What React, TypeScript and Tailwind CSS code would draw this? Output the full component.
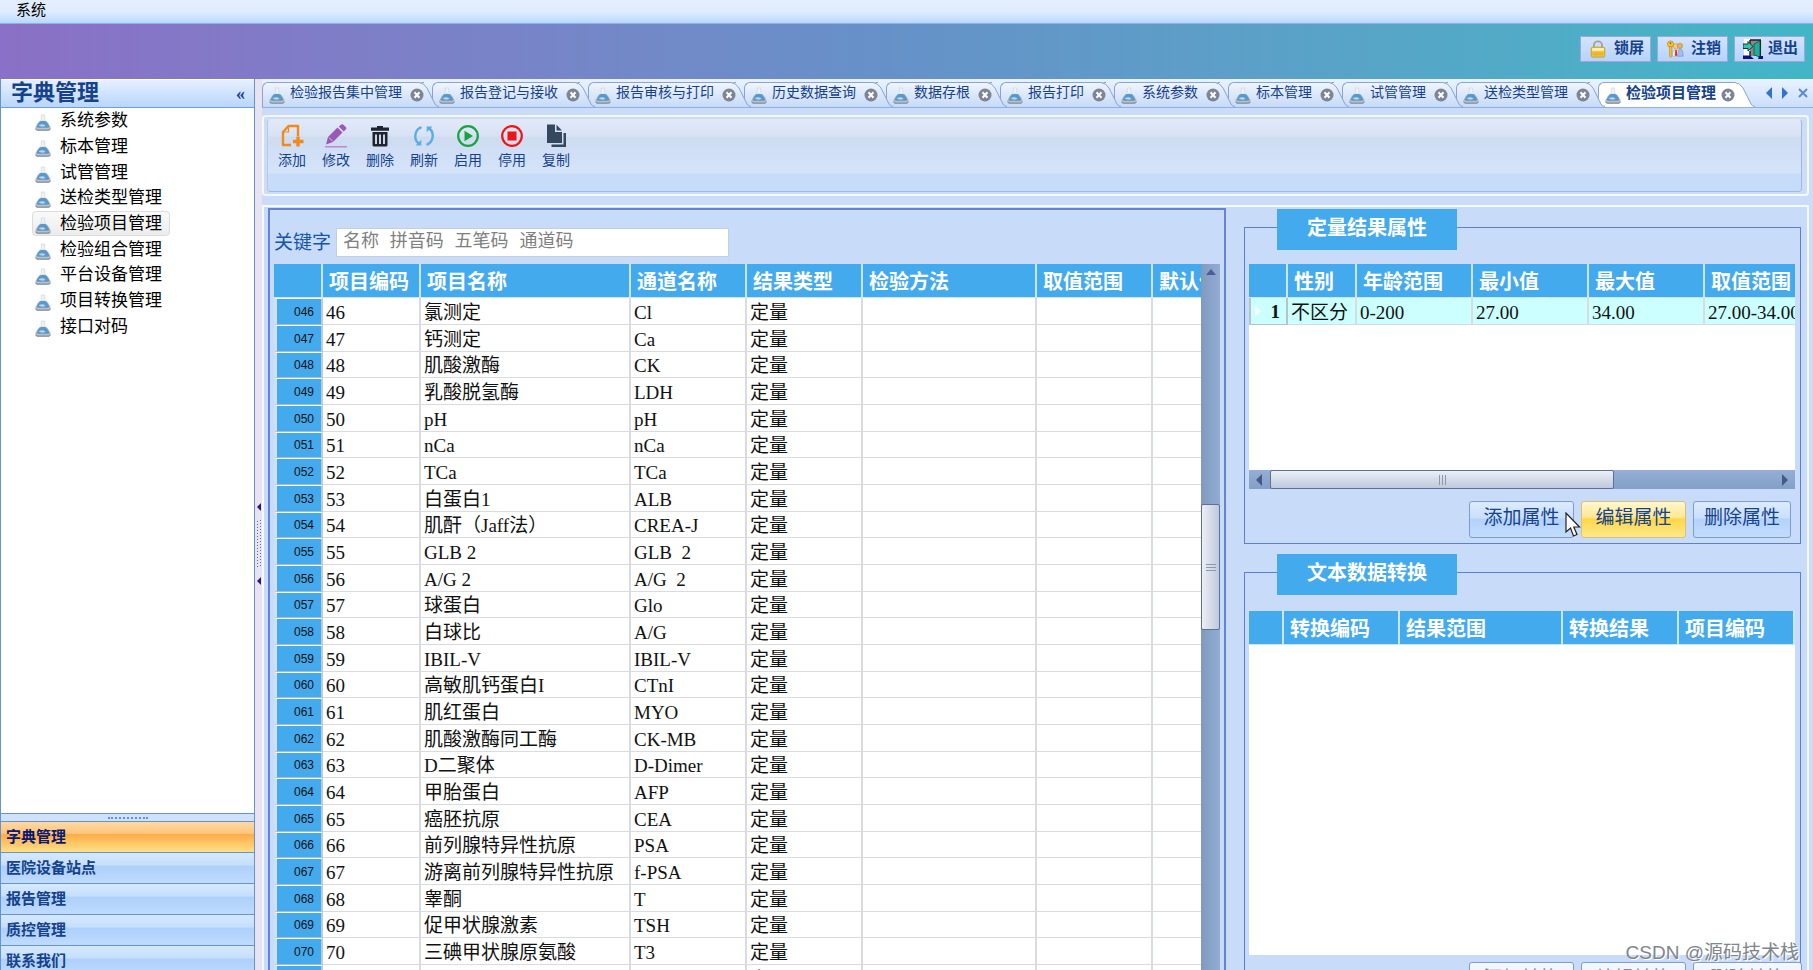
import React from 'react';

interface TestItem {
  code: string;
  name: string;
  channel: string;
}

const treeItems = [
  '系统参数',
  '标本管理',
  '试管管理',
  '送检类型管理',
  '检验项目管理',
  '检验组合管理',
  '平台设备管理',
  '项目转换管理',
  '接口对码',
];

const navGroups = ['字典管理', '医院设备站点', '报告管理', '质控管理', '联系我们'];

const tabs = [
  '检验报告集中管理',
  '报告登记与接收',
  '报告审核与打印',
  '历史数据查询',
  '数据存根',
  '报告打印',
  '系统参数',
  '标本管理',
  '试管管理',
  '送检类型管理',
  '检验项目管理',
];

const activeTab = '检验项目管理';

const testItems: TestItem[] = [
  { code: '46', name: '氯测定', channel: 'Cl' },
  { code: '47', name: '钙测定', channel: 'Ca' },
  { code: '48', name: '肌酸激酶', channel: 'CK' },
  { code: '49', name: '乳酸脱氢酶', channel: 'LDH' },
  { code: '50', name: 'pH', channel: 'pH' },
  { code: '51', name: 'nCa', channel: 'nCa' },
  { code: '52', name: 'TCa', channel: 'TCa' },
  { code: '53', name: '白蛋白1', channel: 'ALB' },
  { code: '54', name: '肌酐（Jaff法）', channel: 'CREA-J' },
  { code: '55', name: 'GLB 2', channel: 'GLB  2' },
  { code: '56', name: 'A/G 2', channel: 'A/G  2' },
  { code: '57', name: '球蛋白', channel: 'Glo' },
  { code: '58', name: '白球比', channel: 'A/G' },
  { code: '59', name: 'IBIL-V', channel: 'IBIL-V' },
  { code: '60', name: '高敏肌钙蛋白I', channel: 'CTnI' },
  { code: '61', name: '肌红蛋白', channel: 'MYO' },
  { code: '62', name: '肌酸激酶同工酶', channel: 'CK-MB' },
  { code: '63', name: 'D二聚体', channel: 'D-Dimer' },
  { code: '64', name: '甲胎蛋白', channel: 'AFP' },
  { code: '65', name: '癌胚抗原', channel: 'CEA' },
  { code: '66', name: '前列腺特异性抗原', channel: 'PSA' },
  { code: '67', name: '游离前列腺特异性抗原', channel: 'f-PSA' },
  { code: '68', name: '睾酮', channel: 'T' },
  { code: '69', name: '促甲状腺激素', channel: 'TSH' },
  { code: '70', name: '三碘甲状腺原氨酸', channel: 'T3' },
  { code: '71', name: '', channel: '' },
];

const FlaskIcon: React.FC = () => (
  <svg width="16" height="17" viewBox="0 0 16 17" className="shrink-0" aria-hidden="true">
    <path d="M6.300 1h3.400v4.500l3 4H3.300l3-4z" fill="#eef3f8" stroke="#ccd6e0" strokeWidth=".7" />
    <path d="M3 8.500h10l2.600 4.500v1.800q0 1.700-1.800 1.700H2.200Q.4 16.500.4 14.800V13z" fill="#b9c1ca" />
    <path d="M.8 14.500q.2 1.600 1.600 1.600h11.200q1.400 0 1.600-1.600" fill="none" stroke="#858c95" strokeWidth="1.100" />
    <path d="M4.500 7.500q3.500-1.500 7 0l2.700 4.800q.4 1.400-1 1.500H2.800q-1.400-.1-1-1.500z" fill="#5b98c9" />
    <path d="M3.500 11.500q4-2.600 7 .2-3 2-7-.2z" fill="#b4d6ef" />
  </svg>
);

const CloseIcon: React.FC = () => (
  <svg width="14" height="14" viewBox="0 0 14 14" aria-hidden="true">
    <circle cx="7" cy="7" r="6.500" fill="#7d8498" />
    <path d="M4.500 4.300l5 5.400M9.500 4.300l-5 5.400" stroke="#fff" strokeWidth="2" />
  </svg>
);

const AddIcon: React.FC = () => (
  <svg width="24" height="24" viewBox="0 0 24 24" fill="none" stroke="#f08a1c" strokeWidth="2.400" aria-hidden="true">
    <path d="M11 21H3V8L8.500 2H18v10" strokeLinejoin="round" />
    <path d="M8.500 2v6H3" strokeWidth="1.200" />
    <path d="M18 12.500v10M13 17.500h10.500" strokeWidth="3.400" />
  </svg>
);

const EditIcon: React.FC = () => (
  <svg width="24" height="24" viewBox="0 0 24 24" fill="#9b59b6" aria-hidden="true">
    <path d="M2 20.500L4 13 13.500 3.500l5 5L9 18z" />
    <path d="M14.800 2.500L17.300.4q1.200-.6 2.200.4l2.400 2.500q.9 1 0 2L19.700 7.400z" />
    <path d="M5 13.500l3.800 3.800" stroke="#dfe6f6" strokeWidth=".8" />
    <path d="M1 22h22v1.500H1z" fill="#b78bcd" />
  </svg>
);

const DeleteIcon: React.FC = () => (
  <svg width="24" height="24" viewBox="0 0 24 24" fill="#1e2430" aria-hidden="true">
    <path d="M9 2h6v1.500h6v3.300H3V3.500h6z" />
    <path d="M4.500 8h15v13q0 1.500-1.500 1.500H6q-1.500 0-1.500-1.500z" />
    <path d="M8 10.500v9.500M12 10.500v9.500M16 10.500v9.500" stroke="#dfe6f6" strokeWidth="1.800" />
  </svg>
);

const RefreshIcon: React.FC = () => (
  <svg width="24" height="24" viewBox="0 0 24 24" fill="none" stroke="#5dade2" strokeWidth="2.400" aria-hidden="true">
    <path d="M9.500 3.200A9 9.500 0 0 0 6.500 19.500" />
    <path d="M14.500 20.800A9 9.500 0 0 0 17.500 4.500" />
    <path d="M3.500 21.500h5.800v-5.800zM20.500 2.500h-5.800v5.800z" fill="#5dade2" stroke="none" />
  </svg>
);

const StartIcon: React.FC = () => (
  <svg width="24" height="24" viewBox="0 0 24 24" fill="none" aria-hidden="true">
    <circle cx="12" cy="12" r="9.800" stroke="#16a53b" strokeWidth="2.200" />
    <path d="M8.500 6.800v10.400l8.500-5.200z" fill="#16a53b" />
  </svg>
);

const StopIcon: React.FC = () => (
  <svg width="24" height="24" viewBox="0 0 24 24" fill="none" aria-hidden="true">
    <circle cx="12" cy="12" r="9.800" stroke="#f01414" strokeWidth="2.200" />
    <path d="M7.500 7.500h9v9h-9z" fill="#f01414" />
  </svg>
);

const CopyIcon: React.FC = () => (
  <svg width="24" height="24" viewBox="0 0 24 24" fill="#34495e" aria-hidden="true">
    <path d="M3 .5h8V8h7v11H3z" />
    <path d="M12.500.8L18 6.500h-5.500z" />
    <path d="M19.500 9H22v14H7.500v-2.500h12z" />
  </svg>
);

const LockIcon: React.FC = () => (
  <svg width="18" height="18" viewBox="0 0 18 20" fill="none" aria-hidden="true">
    <path d="M4.500 9V5.500a4.500 4 0 0 1 9 0V9" stroke="#a8a28c" strokeWidth="2" />
    <rect x="1.500" y="8" width="15" height="11" rx="1.500" fill="#f3c63d" stroke="#c99a2a" />
    <path d="M2.500 10.500h13" stroke="#fdf0b8" strokeWidth="3" />
    <path d="M3 14.500h12M3 16.500h12" stroke="#dba92b" />
  </svg>
);

const LogoutIcon: React.FC = () => (
  <svg width="18" height="18" viewBox="0 0 18 20" aria-hidden="true">
    <circle cx="10" cy="7" r="3" fill="#f4c79a" stroke="#c78f55" strokeWidth=".6" />
    <circle cx="14.500" cy="6.500" r="3" fill="#e8b05a" stroke="#b57d30" strokeWidth=".6" />
    <path d="M6 18q0-7 4-7t4 7z" fill="#f2f5fb" stroke="#8b9fca" strokeWidth=".6" />
    <path d="M12 18q0-8 3-8t3 8z" fill="#9fc0ef" stroke="#6c8bc4" strokeWidth=".6" />
    <path d="M9.300 11h1.600l.8 6-1.500 1-1.500-1z" fill="#d8392b" />
    <circle cx="4" cy="4.500" r="3.500" fill="#f7c62c" stroke="#b98511" strokeWidth=".7" />
    <path d="M3 7h2.500v11L4 19.500 3 18z" fill="#f7c62c" stroke="#b98511" strokeWidth=".7" />
    <circle cx="4" cy="3.500" r="1" fill="#8a6510" />
  </svg>
);

const ExitIcon: React.FC = () => (
  <svg width="20" height="20" viewBox="0 0 20 20" aria-hidden="true">
    <path d="M1 0h18v17H1z" fill="#fff" />
    <path d="M7 1h11v16H7z" fill="#8a8a8a" />
    <path d="M7 1h11M7 1v4M17.500 1v16M7 12v5" stroke="#1c1c1c" strokeWidth="1.400" />
    <path d="M11 5l6-3v16l-6-2z" fill="#1fae9b" stroke="#0b4f48" strokeWidth=".8" />
    <path d="M0 5h5V2.500L10 7.500 5 12V9.500H0z" fill="#35c3ae" stroke="#12211f" strokeWidth=".9" />
    <path d="M0 16.500h7l4 3.500H0zM16 17h4v3h-5z" fill="#0a128a" />
  </svg>
);

const toolbarActions = [
  { label: '添加', icon: <AddIcon /> },
  { label: '修改', icon: <EditIcon /> },
  { label: '删除', icon: <DeleteIcon /> },
  { label: '刷新', icon: <RefreshIcon /> },
  { label: '启用', icon: <StartIcon /> },
  { label: '停用', icon: <StopIcon /> },
  { label: '复制', icon: <CopyIcon /> },
];

const sessionActions = [
  { label: '锁屏', icon: <LockIcon /> },
  { label: '注销', icon: <LogoutIcon /> },
  { label: '退出', icon: <ExitIcon /> },
];

const Sidebar: React.FC = () => (
  <aside className="flex w-[255px] shrink-0 flex-col border-x border-[#6593cf] bg-white">
    <header className="flex h-[29px] shrink-0 items-center justify-between border-y border-t-white border-b-[#6f9fe0] bg-linear-to-b from-[#e6f0ff] to-[#b9d6fd] pr-[9px] pl-[10px] text-[22px] leading-none font-bold text-[#15428b]">
      <h2 className="pb-[2px]">字典管理</h2>
      <button className="text-lg leading-none" aria-label="收起">«</button>
    </header>
    <ul className="flex h-[231px] shrink-0 flex-col text-[17px] leading-none text-black">
      {treeItems.map((item) => (
        <li key={item} className="flex flex-1">
          <button
            className={
              item === activeTab
                ? 'ml-[31px] flex items-center gap-[9px] rounded-sm border border-[#dcdcdc] bg-linear-to-b from-[#fafafa] to-[#ececec] pr-[7px] pl-[2px]'
                : 'ml-[31px] flex items-center gap-[9px] border border-transparent pr-[7px] pl-[2px]'
            }
          >
            <span className="pt-1">
              <FlaskIcon />
            </span>
            <span>{item}</span>
          </button>
        </li>
      ))}
    </ul>
    <div className="flex-1" />
    <div className="flex h-2 shrink-0 items-center justify-center border-t border-[#6593cf] bg-[#cfe1fb]">
      <div className="w-10 border-t-2 border-dotted border-[#6a8fca]" />
    </div>
    <nav className="h-[149px] shrink-0 overflow-hidden">
      {navGroups.map((group) => (
        <button
          key={group}
          className={
            group === '字典管理'
              ? 'flex h-[31px] w-full items-center border-t border-[#6593cf] bg-[linear-gradient(#fed9a4_0%,#fdc47c_38%,#fdac48_42%,#fee087_100%)] pl-[5px] text-[15px] leading-none font-bold text-[#0a1a6e]'
              : 'flex h-[31px] w-full items-center border-t border-[#6593cf] bg-[linear-gradient(#d6e8ff_0%,#c6dffd_40%,#aed0fb_44%,#bfdbff_100%)] pl-[5px] text-[15px] leading-none font-bold text-[#15428b]'
          }
        >
          {group}
        </button>
      ))}
    </nav>
  </aside>
);

const Splitter: React.FC = () => (
  <div className="flex w-[7px] shrink-0 flex-col items-center bg-[#e8e4ef] pt-[423px]">
    <svg width="6" height="84" viewBox="0 0 6 84" aria-hidden="true">
      <path d="M5 1v8L1 5zM5 75v8l-4-4z" fill="#2b1a6b" />
      <path d="M1.500 19v48M4.500 18v48" stroke="#6a63a8" strokeDasharray="1 2" />
    </svg>
  </div>
);

const TabBar: React.FC = () => (
  <div className="flex h-[29px] shrink-0 items-end border-b border-[#8fb0e2] bg-linear-to-b from-[#eaf2ff] to-[#cbdffb] pt-[3px]">
    <ul className="flex h-full items-stretch">
      {tabs.map((tab) => {
        const active = tab === activeTab;
        return (
          <li key={tab} className="flex">
            <div
              className={
                active
                  ? 'flex items-center rounded-tl-[6px] border-t border-l border-[#8ba3cf] bg-white pl-[6px]'
                  : 'flex items-center rounded-tl-[6px] border-t border-l border-[#8ba3cf] bg-linear-to-b from-[#f0f5fd] to-[#c6daf7] pl-[6px]'
              }
            >
              <FlaskIcon />
              <button
                className={
                  active
                    ? 'ml-[5px] pb-1 text-[15px] leading-none font-bold whitespace-nowrap text-[#15428b]'
                    : 'ml-[5px] pb-1 text-[14px] leading-none whitespace-nowrap text-[#15428b]'
                }
              >
                {tab}
              </button>
              <button className={active ? 'relative z-20 ml-[5px]' : 'relative z-20 ml-2'} aria-label={`关闭${tab}`}>
                <CloseIcon />
              </button>
            </div>
            <svg
              width="20"
              height="25"
              viewBox="0 0 20 25"
              className={active ? 'relative z-10' : 'relative z-10 -mr-[7px] -ml-[5px]'}
              aria-hidden="true"
            >
              <defs>
                <linearGradient id="tab-face" x1="0" y1="0" x2="0" y2="1">
                  <stop offset="0" stopColor="#f0f5fd" />
                  <stop offset="1" stopColor="#c6daf7" />
                </linearGradient>
              </defs>
              <path d="M0 0Q5 .5 8 6L16 22q1.500 2.500 4 3H0z" fill={active ? '#fff' : 'url(#tab-face)'} />
              <path d="M0 .5Q5 1 8 6L16 22q1.500 2.500 4 2.500" fill="none" stroke="#8ba3cf" />
            </svg>
          </li>
        );
      })}
    </ul>
    <div className="ml-auto flex h-full items-center gap-2 pr-1 pb-1">
      <button aria-label="向左">
        <svg width="8" height="12" viewBox="0 0 8 12" aria-hidden="true">
          <path d="M7 0v12L1 6z" fill="#2f74d0" />
        </svg>
      </button>
      <button aria-label="向右">
        <svg width="8" height="12" viewBox="0 0 8 12" aria-hidden="true">
          <path d="M1 0v12l6-6z" fill="#2f74d0" />
        </svg>
      </button>
      <button aria-label="关闭当前页">
        <svg width="12" height="12" viewBox="0 0 12 12" aria-hidden="true">
          <path d="M2 2l8 8M10 2l-8 8" stroke="#5a8bd6" strokeWidth="2" />
        </svg>
      </button>
    </div>
  </div>
);

const Toolbar: React.FC = () => (
  <div className="mt-[7px] mr-1 h-[81px] shrink-0 rounded-sm border-2 border-[#f3f7fe] bg-[#cdddf6] py-[2px] pr-[5px] pl-[3px]">
    <div className="flex h-full items-start rounded-sm border border-t-[#dfe7f8] border-r-[#9db9e0] border-b-[#9dbbe4] border-l-[#b4c8e8] bg-[linear-gradient(#e2e9f8_0px,#d8e2f5_16px,#cedcee_17px,#d0def6_30px,#d6e4fa_53px,#c6dcf9_54px)] pt-[4px] pl-[2px]">
      {toolbarActions.map((action) => (
        <button key={action.label} className="flex w-11 flex-col items-center gap-[6px] text-[14px] leading-none text-[#15428b]">
          {action.icon}
          {action.label}
        </button>
      ))}
    </div>
  </div>
);

const headCell = 'overflow-hidden border-r-2 border-b border-[#c9e6fa] pt-[2px] pl-[6px] text-left text-[20px] leading-none font-bold text-white';
const bodyCell = 'overflow-hidden border-r-2 border-b border-[#d9dbe0] pt-[2px] pl-[3px]';

const ItemTable: React.FC = () => (
  <div className="flex min-h-0 flex-1">
    <div className="min-w-0 flex-1 overflow-hidden bg-white">
      <table className="w-[994px] table-fixed border-separate border-spacing-0 text-[19px] leading-none whitespace-pre text-[#111]">
        <colgroup>
          <col className="w-[49px]" />
          <col className="w-[98px]" />
          <col className="w-[210px]" />
          <col className="w-[116px]" />
          <col className="w-[116px]" />
          <col className="w-[174px]" />
          <col className="w-[116px]" />
          <col className="w-[115px]" />
        </colgroup>
        <thead className="bg-[#44aaee]">
          <tr className="h-[34px]">
            <th className={headCell} />
            <th className={headCell}>项目编码</th>
            <th className={headCell}>项目名称</th>
            <th className={headCell}>通道名称</th>
            <th className={headCell}>结果类型</th>
            <th className={headCell}>检验方法</th>
            <th className={headCell}>取值范围</th>
            <th className={headCell}>默认值</th>
          </tr>
        </thead>
        <tbody>
          {testItems.map((item) => (
            <tr key={item.code} className="h-[27px] [&:nth-child(3n)]:h-[26px]">
              <th className="border-t border-r-2 border-b border-l-[3px] border-t-white border-r-[#b9cbdc] border-b-[#a9bccb] border-l-[#cfe0f2] bg-[#44aaee] pr-[7px] text-right font-[Liberation_Sans] text-[12px] font-normal">
                0{item.code}
              </th>
              <td className={bodyCell}>{item.code}</td>
              <td className={bodyCell}>{item.name}</td>
              <td className={bodyCell}>{item.channel}</td>
              <td className={bodyCell}>定量</td>
              <td className={bodyCell} />
              <td className={bodyCell} />
              <td className={bodyCell} />
            </tr>
          ))}
        </tbody>
      </table>
    </div>
    <div className="flex w-[19px] shrink-0 flex-col items-center bg-linear-to-r from-[#8099bf] to-[#92acd3]">
      <svg width="12" height="18" viewBox="0 0 12 18" aria-hidden="true">
        <path d="M1 11h10L6 5z" fill="#4c5f92" />
      </svg>
      <div className="mt-[222px] flex h-[126px] w-full flex-col items-center justify-center gap-[2px] rounded-xs border border-[#5f6f96] bg-linear-to-r from-[#eceff6] to-[#bfc9dc]">
        <div className="h-px w-[10px] bg-[#8d97ad]" />
        <div className="h-px w-[10px] bg-[#8d97ad]" />
        <div className="h-px w-[10px] bg-[#8d97ad]" />
      </div>
    </div>
  </div>
);

const GroupTitle: React.FC<{ children: React.ReactNode }> = ({ children }) => (
  <h3 className="-mt-[19px] ml-7 flex h-[41px] w-[180px] shrink-0 items-center justify-center bg-[#44aaee] pb-[3px] text-[20px] leading-none font-bold text-white">
    {children}
  </h3>
);

const blueButton =
  'flex h-[37px] items-center justify-center rounded-[3px] border border-[#7d9ccf] bg-[linear-gradient(#dcebff_0%,#cadffc_45%,#b4d2fb_50%,#c3dcfd_100%)] pb-[5px] text-[19px] leading-none text-[#15428b]';
const goldButton =
  'flex h-[37px] items-center justify-center rounded-[3px] border border-[#d6c07a] bg-[linear-gradient(#fff7cf_0%,#ffe995_42%,#ffd848_50%,#ffe88f_100%)] pb-[5px] text-[19px] leading-none text-[#15428b]';
const paleButton =
  'flex h-[37px] items-center justify-center rounded-[3px] border border-[#7d9ccf] bg-linear-to-b from-[#f4f8ff] to-[#e2ecfb] pb-[5px] text-[19px] leading-none text-[#7d8799]';

const RangePanel: React.FC = () => (
  <section className="relative mt-5 shrink-0 border border-[#5f7fd3] pr-[5px] pb-[5px] pl-1">
    <GroupTitle>定量结果属性</GroupTitle>
    <div className="mt-[14px] h-[206px] overflow-hidden bg-white">
      <table className="w-[572px] table-fixed border-separate border-spacing-0 text-[19px] leading-none whitespace-pre text-[#111]">
        <colgroup>
          <col className="w-[39px]" />
          <col className="w-[69px]" />
          <col className="w-[116px]" />
          <col className="w-[116px]" />
          <col className="w-[116px]" />
          <col className="w-[116px]" />
        </colgroup>
        <thead className="bg-[#44aaee]">
          <tr className="h-[34px]">
            <th className={headCell} />
            <th className={headCell}>性别</th>
            <th className={headCell}>年龄范围</th>
            <th className={headCell}>最小值</th>
            <th className={headCell}>最大值</th>
            <th className={headCell}>取值范围</th>
          </tr>
        </thead>
        <tbody className="bg-[#ccffff]">
          <tr className="h-[27px]">
            <th className="border-r-2 border-b border-l-2 border-[#b4c4c8] pr-[6px]">
              <span className="flex items-center justify-between pl-1">
                <svg width="6" height="10" viewBox="0 0 6 10" aria-hidden="true">
                  <path d="M0 0v10l6-5z" fill="#fff" />
                </svg>
                1
              </span>
            </th>
            <td className={bodyCell}>不区分</td>
            <td className={bodyCell}>0-200</td>
            <td className={bodyCell}>27.00</td>
            <td className={bodyCell}>34.00</td>
            <td className={bodyCell}>27.00-34.00</td>
          </tr>
        </tbody>
      </table>
    </div>
    <div className="flex h-[19px] items-center bg-linear-to-b from-[#94aed4] to-[#84a0c8]">
      <svg width="21" height="12" viewBox="0 0 21 12" aria-hidden="true">
        <path d="M13 0v12L7 6z" fill="#46598a" />
      </svg>
      <div className="flex h-full w-[344px] items-center justify-center gap-[2px] rounded-xs border border-[#5f6f96] bg-linear-to-b from-[#eceff6] to-[#bfc9dc]">
        <div className="h-[10px] w-px bg-[#8d97ad]" />
        <div className="h-[10px] w-px bg-[#8d97ad]" />
        <div className="h-[10px] w-px bg-[#8d97ad]" />
      </div>
      <svg width="13" height="12" viewBox="0 0 13 12" className="ml-auto" aria-hidden="true">
        <path d="M0 0v12l6-6z" fill="#46598a" />
      </svg>
    </div>
    <div className="mt-3 flex justify-end gap-[7px] pr-1">
      <button className={`${blueButton} w-[105px]`}>添加属性</button>
      <button className={`${goldButton} w-[105px]`}>编辑属性</button>
      <button className={`${blueButton} w-[98px]`}>删除属性</button>
    </div>
    <svg width="16" height="26" viewBox="0 0 16 26" className="absolute right-[219px] bottom-[5px]" aria-hidden="true">
      <path d="M1 1v19l4.500-4 3 8 3.500-1.500-3.200-7.500H14.500z" fill="#fff" stroke="#222" strokeWidth="1.200" />
    </svg>
  </section>
);

const ConvertPanel: React.FC = () => (
  <section className="mt-7 -mb-[30px] flex min-h-0 flex-1 flex-col border border-[#5f7fd3] pr-[5px] pl-1">
    <GroupTitle>文本数据转换</GroupTitle>
    <div className="mt-4 min-h-0 flex-1 overflow-hidden bg-white">
      <table className="w-full table-fixed border-separate border-spacing-0">
        <colgroup>
          <col className="w-[35px]" />
          <col className="w-[116px]" />
          <col className="w-[163px]" />
          <col className="w-[116px]" />
          <col />
        </colgroup>
        <thead className="bg-[#44aaee]">
          <tr className="h-[34px]">
            <th className={headCell} />
            <th className={headCell}>转换编码</th>
            <th className={headCell}>结果范围</th>
            <th className={headCell}>转换结果</th>
            <th className={headCell}>项目编码</th>
          </tr>
        </thead>
      </table>
    </div>
    <div className="mt-[7px] -mr-[7px] flex justify-end gap-[7px]">
      <button className={`${paleButton} w-[105px]`}>添加转换</button>
      <button className={`${paleButton} w-[105px]`}>编辑转换</button>
      <button className={`${paleButton} w-[109px]`}>删除转换</button>
    </div>
  </section>
);

const App: React.FC = () => {
  return (
    <div className="relative flex h-screen flex-col overflow-hidden bg-[#cbdcf8] font-['Liberation_Serif','Noto_Sans_CJK_SC',sans-serif]">
      <div className="flex h-6 shrink-0 items-center border-b border-[#8fb2e6] bg-linear-to-b from-[#e3edff] via-[#e0edff] to-[#b9d8ff] pb-[2px] pl-4">
        <button className="text-[15px] leading-none text-black">系统</button>
      </div>

      <header className="flex h-[55px] shrink-0 items-center justify-end gap-[6px] bg-linear-to-r from-[#8a70c6] via-[#6592c8] to-[#42b6c6] pr-2 pb-[6px]">
        {sessionActions.map((action) => (
          <button
            key={action.label}
            className="flex h-[26px] w-[71px] items-center justify-between border border-[#9aa8dc] bg-linear-to-b from-[#d3e4fd] to-[#b6d3fb] pr-[6px] pl-2 text-[15px] leading-none font-bold text-[#15428b]"
          >
            {action.icon}
            {action.label}
          </button>
        ))}
      </header>

      <div className="flex min-h-0 flex-1">
        <Sidebar />
        <Splitter />
        <main className="flex min-w-0 flex-1 flex-col">
          <TabBar />
          <Toolbar />
          <div className="mt-[9px] mr-1 flex min-h-0 flex-1 border-x-2 border-t-2 border-[#f3f7fe] bg-[#c8dcf9] pr-[6px] pl-1">
            <section className="mt-px flex min-w-0 flex-1 flex-col border-2 border-b-0 border-[#6483d3] pr-1 pl-1">
              <div className="flex h-[54px] shrink-0 items-end gap-[5px] pb-[7px]">
                <label htmlFor="keyword" className="pb-[5px] text-[19px] leading-none text-[#1556a8]">
                  关键字
                </label>
                <input
                  id="keyword"
                  type="text"
                  placeholder="名称 拼音码 五笔码 通道码"
                  className="h-[29px] w-[393px] border border-[#c3cede] bg-white px-[6px] pb-[2px] font-['Liberation_Mono','Noto_Sans_CJK_SC',monospace] text-[18px] leading-none placeholder:text-[#808080]"
                />
              </div>
              <ItemTable />
            </section>
            <div className="ml-[18px] flex w-[557px] shrink-0 flex-col">
              <RangePanel />
              <ConvertPanel />
            </div>
          </div>
        </main>
      </div>

      <p className="absolute right-[14px] bottom-2 font-['Liberation_Sans','Noto_Sans_CJK_SC',sans-serif] text-[19px] leading-none text-[#80858c] [text-shadow:1px_1px_0_#ffffff]">
        CSDN @源码技术栈
      </p>
    </div>
  );
};

export default App;
